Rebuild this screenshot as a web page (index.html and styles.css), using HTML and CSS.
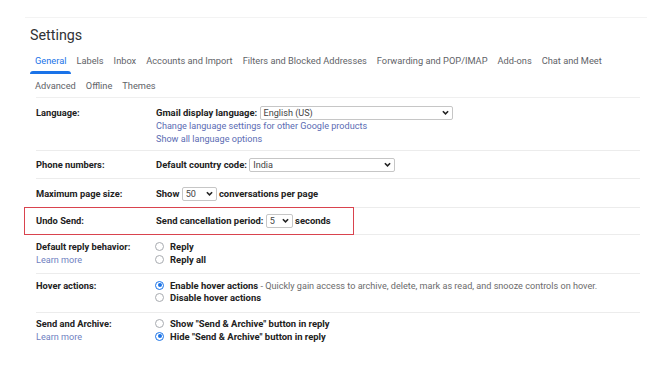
FILE: index.html
```html
<!DOCTYPE html>
<html lang="en">
<head>
<meta charset="utf-8">
<title>Settings</title>
<link rel="stylesheet" href="styles.css">
</head>
<body>
<div class="page">
  <div class="topline"></div>
  <h1 class="title">Settings</h1>
  <nav class="tabs">
    <div class="tabrow">
      <span class="tab active">General</span>
      <span class="tab">Labels</span>
      <span class="tab">Inbox</span>
      <span class="tab">Accounts and Import</span>
      <span class="tab">Filters and Blocked Addresses</span>
      <span class="tab">Forwarding and POP/IMAP</span>
      <span class="tab">Add-ons</span>
      <span class="tab">Chat and Meet</span>
    </div>
    <div class="tabrow">
      <span class="tab">Advanced</span>
      <span class="tab">Offline</span>
      <span class="tab">Themes</span>
    </div>
  </nav>

  <div class="rows">
    <div class="row row-lang">
      <div class="label">Language:</div>
      <div class="content">
        <div class="line"><b>Gmail display language:</b> <span class="select sel-lang"><span>English (US)</span><svg class="chev" viewBox="0 0 8 5"><path d="M1 1l3 3 3-3" /></svg></span></div>
        <div class="line"><a class="link">Change language settings for other Google products</a></div>
        <div class="line"><a class="link">Show all language options</a></div>
      </div>
    </div>

    <div class="row">
      <div class="label">Phone numbers:</div>
      <div class="content">
        <div class="line"><b>Default country code:</b> <span class="select sel-phone"><span>India</span><svg class="chev" viewBox="0 0 8 5"><path d="M1 1l3 3 3-3" /></svg></span></div>
      </div>
    </div>

    <div class="row row-max">
      <div class="label">Maximum page size:</div>
      <div class="content">
        <div class="line"><b>Show</b> <span class="select sel-small"><span>50</span><svg class="chev" viewBox="0 0 8 5"><path d="M1 1l3 3 3-3" /></svg></span> <b>conversations per page</b></div>
      </div>
    </div>

    <div class="row row-undo">
      <div class="highlight"></div>
      <div class="label">Undo Send:</div>
      <div class="content">
        <div class="line"><b>Send cancellation period:</b> <span class="select sel-tiny"><span>5</span><svg class="chev" viewBox="0 0 8 5"><path d="M1 1l3 3 3-3" /></svg></span> <b>seconds</b></div>
      </div>
    </div>

    <div class="row row-multi row-reply">
      <div class="label">Default reply behavior:<br><a class="learn">Learn more</a></div>
      <div class="content">
        <div class="line"><span class="radio"></span><b>Reply</b></div>
        <div class="line"><span class="radio"></span><b>Reply all</b></div>
      </div>
    </div>

    <div class="row row-multi row-hover">
      <div class="label">Hover actions:</div>
      <div class="content">
        <div class="line"><span class="radio checked"></span><b>Enable hover actions</b><span class="desc"> - Quickly gain access to archive, delete, mark as read, and snooze controls on hover.</span></div>
        <div class="line"><span class="radio"></span><b>Disable hover actions</b></div>
      </div>
    </div>

    <div class="row row-multi row-last">
      <div class="label">Send and Archive:<br><a class="learn">Learn more</a></div>
      <div class="content">
        <div class="line"><span class="radio"></span><b>Show "Send &amp; Archive" button in reply</b></div>
        <div class="line"><span class="radio checked"></span><b>Hide "Send &amp; Archive" button in reply</b></div>
      </div>
    </div>
  </div>
</div>
</body>
</html>
```

FILE: styles.css
```css
* { box-sizing: border-box; }
html, body { margin: 0; padding: 0; background: #fff; }
body {
  font-family: Roboto, "Liberation Sans", Arial, sans-serif;
  color: #202124;
  width: 660px;
  height: 371px;
  overflow: hidden;
}
.page { padding: 17px 20px 0 25px; }
.topline { height: 1px; background: #f3f3f3; width: 622px; }
.title {
  margin: 8px 0 0 5px;
  font-family: Roboto, "Open Sans", sans-serif;
  font-weight: 400;
  font-size: 14.3px;
  line-height: 18px;
  color: #303134;
}
.tabs { margin: 6px 0 0 5px; }
.tabrow { display: flex; height: 24px; }
.tabrow + .tabrow { height: 23px; }
.tab {
  font-size: 9.25px;
  color: #5f6368;
  padding: 0 5px;
  line-height: 22px;
  position: relative;
}
.tabrow + .tabrow .tab { line-height: 23px; }
.tab.active { color: #1a73e8; }
.tab.active::after {
  content: "";
  position: absolute;
  left: 0; right: 0; bottom: 0;
  height: 3px;
  background: #1a73e8;
  border-radius: 3px 3px 0 0;
}
.rows { margin-left: 11px; width: 604px; border-top: 1px solid #efefef; }
.row {
  display: grid;
  grid-template-columns: 120px 1fr;
  border-bottom: 1px solid #ececec;
  padding: 7px 0 6px;
  position: relative;
  font-size: 9.1px;
  line-height: 14px;
}
.row-lang { padding: 8px 0 4px; }
.row-lang .line { line-height: 13px; }
.row-max { padding: 8px 0 6px; }
.row-undo { padding: 6px 0 6px; }
.row-multi { padding: 6px 0 5px; }
.row-multi .line, .row-multi .label { line-height: 12.8px; }
.row-reply { padding: 6px 0 6px; }
.row-hover { padding: 6px 0 7px; }
.row-last { border-bottom: none; padding-top: 5px; }
.label { font-weight: 700; color: #222; font-size: 9.3px; }
.content b { font-weight: 700; color: #222; font-size: 9.45px; }
.link, .learn { color: #5b6cb3; text-decoration: none; font-weight: 400; font-size: 9.1px; }
.learn { color: #6f7fbf; }
.desc { color: #6b6b6b; }
.select {
  display: inline-flex;
  align-items: center;
  justify-content: space-between;
  vertical-align: middle;
  height: 14px;
  border: 1px solid #c6c6c6;
  border-radius: 2px;
  padding: 0 3px;
  margin-top: -2px;
  font-weight: 400;
  color: #444;
  background: #fff;
  line-height: 12px;
}
.sel-lang { width: 193px; }
.sel-phone { width: 146px; }
.sel-small { width: 35px; }
.sel-tiny { width: 27px; }
.chev { width: 7px; height: 5px; fill: none; stroke: #222; stroke-width: 1.8; }
.radio {
  display: inline-block;
  width: 9px; height: 9px;
  border: 1px solid #a8abb0;
  border-radius: 50%;
  margin: 0 6px 0 0;
  vertical-align: -1px;
  position: relative;
}
.radio.checked { border-color: #1a73e8; }
.radio.checked::after {
  content: "";
  position: absolute;
  left: 1.5px; top: 1.5px;
  width: 4px; height: 4px;
  border-radius: 50%;
  background: #1a73e8;
}
.row-multi .content { margin-left: -1px; }
.highlight {
  position: absolute;
  left: -12px; top: -1px;
  width: 330px; height: 28px;
  border: 1.5px solid #d9434e;
  pointer-events: none;
}
```
